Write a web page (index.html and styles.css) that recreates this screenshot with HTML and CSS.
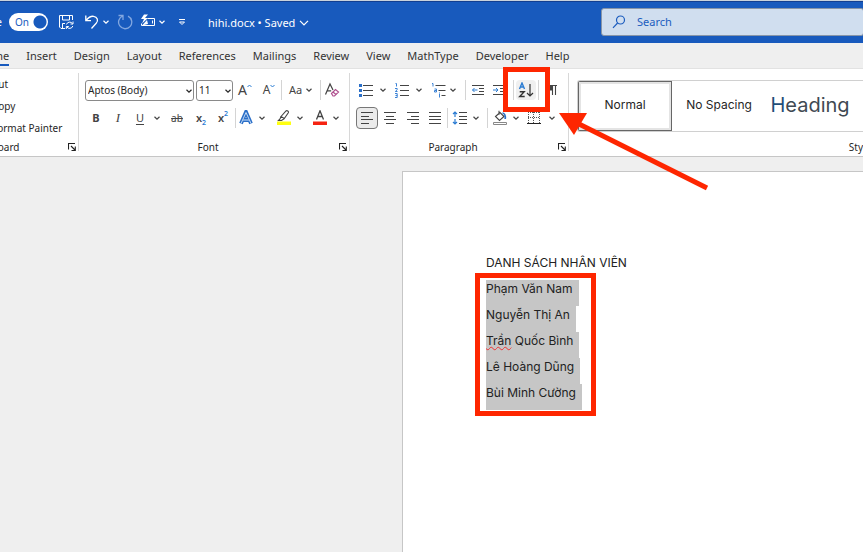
FILE: index.html
```html
<!DOCTYPE html>
<html lang="en">
<head>
<meta charset="utf-8">
<title>hihi.docx</title>
<link rel="stylesheet" href="styles.css">
</head>
<body>
<svg class="defs" width="0" height="0" aria-hidden="true">
  <symbol id="chev" viewBox="0 0 8 8"><path d="M1.500 2.800 4 5.200 6.500 2.800" fill="none" stroke="currentColor" stroke-width="1.200"/></symbol>
  <symbol id="launch" viewBox="0 0 8 8"><path d="M.5 6.500V.5H7M3 3l4 4M7.300 3.500v4H3.500" fill="none" stroke="#222" stroke-width="1.100"/></symbol>
</svg>

<header class="titlebar">
  <div class="quick">
    <label class="autosave" for="autosave">AutoSave</label>
    <span class="switch"><input type="checkbox" id="autosave" role="switch" checked><span class="on">On</span></span>
    <button aria-label="Save"><svg width="16" height="16" viewBox="0 0 16 16" fill="none" stroke="#fff"><path d="M7 14.500H3L1.500 13V1.500h13V6M4.500 1.500v4.500h7V1.500M4.500 14.500v-5H7"/><path d="M8.500 10.500a3.300 3.300 0 0 1 6-.8M15 7.500v2.500h-2.500M14.800 12a3.300 3.300 0 0 1-6 .8M8.300 15v-2.500h2.500"/></svg></button>
    <button aria-label="Undo"><svg width="16" height="16" viewBox="0 0 16 16" fill="none" stroke="#fff" stroke-width="1.300"><path d="M1.800 1.500v5.200H7M2 6.500C4 4 6.500 2 9.500 2.300c4 .4 5.200 4.500 2.700 7L7.500 14.500"/></svg></button>
    <button aria-label="Undo options"><svg width="8" height="8"><use href="#chev"/></svg></button>
    <button class="off" aria-label="Redo"><svg width="16" height="16" viewBox="0 0 16 16" fill="none" stroke="#82a7e0" stroke-width="1.300"><path d="M1.500 1.500h4.500v4.500M5.800 2A6.600 6.600 0 1 0 11 2.200"/></svg></button>
    <button aria-label="Draw table"><svg width="16" height="16" viewBox="0 0 16 16" fill="none" stroke="#fff"><path d="M7.500 4.500h7v7h-13v-2M12.500 6.500v3"/><path d="M4 .5 1 5h3L2 9.500 8 4H5l3-3.500z" fill="#fff" stroke="none"/><path d="M2 11.500 7 6l1 4z" fill="#fff" stroke="none"/></svg></button>
    <button aria-label="Draw options"><svg width="8" height="8"><use href="#chev"/></svg></button>
    <button aria-label="Customize toolbar"><svg width="8" height="8" viewBox="0 0 8 8" fill="none" stroke="#fff"><path d="M1 1.500h6M1.500 4 4 6.500 6.500 4z"/></svg></button>
  </div>
  <button class="docname">hihi.docx • Saved <svg width="10" height="10" viewBox="0 0 8 8"><path d="M.8 2.300 4 5.500 7.200 2.300" fill="none" stroke="#fff"/></svg></button>
  <div class="search">
    <svg width="14" height="14" viewBox="0 0 14 14" fill="none" stroke="#1b5cbe" stroke-width="1.200"><circle cx="8.500" cy="5" r="4"/><path d="M5.600 8 1 12.800"/></svg>
    <input type="search" placeholder="Search" aria-label="Search">
  </div>
</header>

<nav class="tabs">
  <a href="#" class="active">Home</a><a href="#">Insert</a><a href="#">Design</a><a href="#">Layout</a><a href="#">References</a><a href="#">Mailings</a><a href="#">Review</a><a href="#">View</a><a href="#">MathType</a><a href="#">Developer</a><a href="#">Help</a>
</nav>

<section class="ribbon">
  <div class="group clipboard">
    <div class="clips"><button>Cut</button><button>Copy</button><button>Format Painter</button></div>
    <footer><span>Clipboard</span><button aria-label="Clipboard settings"><svg width="8" height="8"><use href="#launch"/></svg></button></footer>
  </div>

  <div class="group font">
    <div class="row font-a">
      <span class="pick"><select aria-label="Font"><option>Aptos (Body)</option></select><svg width="8" height="8"><use href="#chev"/></svg></span>
      <span class="pick"><select aria-label="Font size"><option>11</option></select><svg width="8" height="8"><use href="#chev"/></svg></span>
      <button class="big" aria-label="Grow font">A<svg width="5" height="12" viewBox="0 0 5 12"><path d="M.5 3 2.500 1l2 2" fill="none" stroke="#2b7cd3"/></svg></button>
      <button class="mid" aria-label="Shrink font">A<svg width="5" height="12" viewBox="0 0 5 12"><path d="M.5 1 2.500 3l2-2" fill="none" stroke="#2b7cd3"/></svg></button>
      <i class="sep"></i>
      <button class="case" aria-label="Change case">Aa<svg width="8" height="8"><use href="#chev"/></svg></button>
      <i class="sep"></i>
      <button aria-label="Clear formatting"><svg width="16" height="16" viewBox="0 0 16 16" fill="none" stroke="#444" stroke-width="1.200"><path d="M1.500 12.500 6 2l3 6M3 8.800h4.200"/><path d="m7.500 11.500 4-4 3 2.500-4 4H9z" stroke="#b0508f"/><path d="m9 10 3 2.500" stroke="#b0508f"/></svg></button>
    </div>
    <div class="row font-b">
      <button class="bold">B</button>
      <button class="ital">I</button>
      <button class="under">U</button>
      <button aria-label="Underline options"><svg width="8" height="8"><use href="#chev"/></svg></button>
      <button class="strike">ab</button>
      <button class="script">x<sub>2</sub></button>
      <button class="script">x<sup>2</sup></button>
      <i class="sep"></i>
      <button aria-label="Text effects"><svg width="16" height="16" viewBox="0 0 16 16"><path d="M3 13.500 8 2l5 11.500M5 10h6" fill="none" stroke="#2b6fc8" stroke-width="3.800"/><path d="M3 13.500 8 2.500 13 13.500M5 10h6" fill="none" stroke="#c3daf5"/></svg></button>
      <button aria-label="Effects options"><svg width="8" height="8"><use href="#chev"/></svg></button>
      <button class="end" aria-label="Highlight"><svg width="16" height="16" viewBox="0 0 16 16"><path d="m5 6.500 5-5.500c1-1 3 .5 2.300 1.700L8.300 8.500zM5 6.500 4 9l-1.500 1.500h3l3-2" fill="none" stroke="#444" stroke-width="1.100"/><path fill="#ff1" d="M1 11.500h14V15H1z"/></svg></button>
      <button aria-label="Highlight options"><svg width="8" height="8"><use href="#chev"/></svg></button>
      <button class="end" aria-label="Font color"><svg width="16" height="16" viewBox="0 0 16 16"><path d="M4.500 9.500 8 .8l3.500 8.700M5.700 6.500h4.600" fill="none" stroke="#444" stroke-width="1.300"/><path fill="#f52312" d="M1 11.500h14V15H1z"/></svg></button>
      <button aria-label="Color options"><svg width="8" height="8"><use href="#chev"/></svg></button>
    </div>
    <footer><span>Font</span><button aria-label="Font settings"><svg width="8" height="8"><use href="#launch"/></svg></button></footer>
  </div>

  <div class="group para">
    <div class="row para-a">
      <button aria-label="Bullets"><svg width="16" height="16" viewBox="0 0 16 16"><path d="M5 3.500h10M5 8.500h10M5 13.500h10" stroke="#444"/><path fill="#2b6fc8" d="M1 2h3v3H1zM1 7h3v3H1zM1 12h3v3H1z"/></svg></button>
      <button aria-label="Bullet options"><svg width="8" height="8"><use href="#chev"/></svg></button>
      <button aria-label="Numbering"><svg width="16" height="16" viewBox="0 0 16 16" fill="none"><path d="M6 3.500h9M6 8.500h9M6 13.500h9" stroke="#444"/><path d="M1.500 1.500h1v3M1 6.500h2.200v1.200L1.300 9.500h2.200M1 11.500h2.200v4H1M1.500 13.500h1.700" stroke="#3b82d6"/></svg></button>
      <button aria-label="Numbering options"><svg width="8" height="8"><use href="#chev"/></svg></button>
      <button class="end" aria-label="Multilevel list"><svg width="16" height="16" viewBox="0 0 16 16" fill="none"><path d="M4.500 3.500h10M7.500 8.500h7M10.500 13.500h4" stroke="#444"/><path d="M1 1.500h1v3M3.500 7h2v3h-2V8.500h2M8.500 12v3.500M8.500 10.500v1" stroke="#3b82d6"/></svg></button>
      <button aria-label="List options"><svg width="8" height="8"><use href="#chev"/></svg></button>
      <i class="sep"></i>
      <button aria-label="Decrease indent"><svg width="14" height="14" viewBox="0 0 14 14" fill="none"><path d="M1 2.500h12M8 5.500h5M8 8.500h5M1 11.500h12" stroke="#444"/><path d="M6.500 7h-5M3.500 5l-2 2 2 2" stroke="#2b7cd3"/></svg></button>
      <button aria-label="Increase indent"><svg width="14" height="14" viewBox="0 0 14 14" fill="none"><path d="M1 2.500h12M8 5.500h5M8 8.500h5M1 11.500h12" stroke="#444"/><path d="M1 7h5M4 5l2 2-2 2" stroke="#2b7cd3"/></svg></button>
      <i class="sep"></i>
      <span class="sortcell">
        <button class="sort" aria-label="Sort"><svg width="16" height="16" viewBox="0 0 16 16" fill="none"><path d="M1.500 7 4 1l2.500 6M2.500 5h3" stroke="#2b7cd3" stroke-width="1.400"/><path d="M1.700 9.700h4.500L1.700 14.500h5" stroke="#333" stroke-width="1.400"/><path d="M12 2v12M9 11l3 3 3-3" stroke="#333" stroke-width="1.200"/></svg></button>
        <span class="mark"></span>
        <svg class="arrow" width="152" height="80" viewBox="0 0 152 80"><path d="M22 13 150 77" stroke="#fe2600" stroke-width="5"/><path d="M2 2h28L17 24z" fill="#fe2600"/></svg>
      </span>
      <i class="sep"></i>
      <button aria-label="Show marks"><svg width="12" height="14" viewBox="0 0 12 14"><path d="M5 2.500h6M6.500 2.500V12M9.500 2.500V12" stroke="#444" fill="none" stroke-width="1.100"/><path d="M6 2H4a2.700 2.700 0 0 0 0 5.400h2z" fill="#444"/></svg></button>
    </div>
    <div class="row para-b">
      <button class="pressed" aria-label="Align left" aria-pressed="true"><svg width="14" height="14" viewBox="0 0 14 14"><path d="M1 1.500h12M1 5.500h8M1 8.500h12M1 12.500h8" stroke="#444"/></svg></button>
      <button aria-label="Center"><svg width="14" height="14" viewBox="0 0 14 14"><path d="M1 1.500h12M3 5.500h8M1 8.500h12M3 12.500h8" stroke="#444"/></svg></button>
      <button aria-label="Align right"><svg width="14" height="14" viewBox="0 0 14 14"><path d="M1 1.500h12M5 5.500h8M1 8.500h12M5 12.500h8" stroke="#444"/></svg></button>
      <button aria-label="Justify"><svg width="14" height="14" viewBox="0 0 14 14"><path d="M1 1.500h12M1 5.500h12M1 8.500h12M1 12.500h12" stroke="#444"/></svg></button>
      <i class="sep"></i>
      <button aria-label="Line spacing"><svg width="16" height="14" viewBox="0 0 16 14" fill="none"><path d="M7 1.500h8M7 5.500h8M7 8.500h8M7 12.500h8" stroke="#444"/><path d="M3 1v5M1 3l2-2 2 2M3 8v5M1 11l2 2 2-2" stroke="#2b7cd3" stroke-width="1.200"/></svg></button>
      <button aria-label="Spacing options"><svg width="8" height="8"><use href="#chev"/></svg></button>
      <i class="sep"></i>
      <button aria-label="Shading"><svg width="16" height="16" viewBox="0 0 16 16" fill="none"><path d="m3.500 6.500 4.500-4 4 4-4.500 4zM7 .8v4" stroke="#444" stroke-width="1.100"/><path d="M10.500 3c2 .2 3.200 2.500 2.700 6" stroke="#2b6fc8" stroke-width="1.700"/><path d="M1.500 12.500h13v2h-13z" stroke="#888" fill="#fff"/></svg></button>
      <button aria-label="Shading options"><svg width="8" height="8"><use href="#chev"/></svg></button>
      <button aria-label="Borders"><svg width="14" height="14" viewBox="0 0 14 14"><path d="M1 1.500h12M1 6.500h12M1.500 1v12M6.500 1v12M12.500 1v12" stroke="#555" stroke-dasharray="1 1"/><path d="M0 12.500h14" stroke="#222"/></svg></button>
      <button aria-label="Border options"><svg width="8" height="8"><use href="#chev"/></svg></button>
    </div>
    <footer><span>Paragraph</span><button aria-label="Paragraph settings"><svg width="8" height="8"><use href="#launch"/></svg></button></footer>
  </div>

  <div class="group styles">
    <div class="gallery">
      <button class="chosen">Normal</button><button>No Spacing</button><button class="heading"><span>H</span>eading</button>
    </div>
    <footer><span>Styles</span></footer>
  </div>
</section>

<main class="desk">
  <article class="page" lang="vi">
    <p class="caption">DANH SÁCH NHÂN VIÊN</p>
    <div class="names">
      <p><span>Phạm Văn Nam</span></p>
      <p><span>Nguyễn Thị An</span></p>
      <p><span><u>Trần</u> Quốc Bình</span></p>
      <p><span>Lê Hoàng Dũng</span></p>
      <p><span>Bùi Minh Cường</span></p>
    </div>
  </article>
</main>
</body>
</html>
```
FILE: styles.css
```css
* { box-sizing: border-box; }
body {
  margin: 0;
  min-height: 100vh;
  display: flex;
  flex-direction: column;
  overflow: hidden;
  background: #efefef;
  color: #262626;
  font: 11px/16px "Noto Sans", "Open Sans", sans-serif;
}
.defs { position: absolute; }
button {
  display: flex;
  align-items: center;
  justify-content: center;
  padding: 0;
  border: 0;
  background: none;
  color: inherit;
  font: inherit;
  white-space: nowrap;
}
svg { flex: none; }
p { margin: 0; }

.titlebar {
  display: flex;
  align-items: center;
  height: 43px;
  border-top: 1px solid #c9d2dc;
  background: #185abd;
  box-shadow: inset 0 1px #123f91;
  color: #fff;
}
.quick {
  display: grid;
  grid-template-columns: 9px 39px 36px 16px 11px 28px 18px 10px 30px 11px;
  align-items: center;
}
.autosave { justify-self: end; padding-right: 7px; }
.switch { position: relative; display: flex; }
.switch input {
  appearance: none;
  width: 39px;
  height: 18px;
  margin: 0;
  border-radius: 9px;
  background: radial-gradient(circle at 31px 9px, #185abd 6px, #fff 7px);
}
.on { position: absolute; left: 6px; top: 1px; color: #185abd; font-size: 10px; pointer-events: none; }
.docname { gap: 4px; font-size: 10px; padding-top: 2px; }
.docname { font-size: 11px; }
.search {
  display: flex;
  align-items: center;
  gap: 9px;
  flex: none;
  width: calc(100% - 600px);
  height: 28px;
  margin: 0 -1px 0 auto;
  padding-left: 10px;
  border: 1px solid #8795a8;
  border-radius: 3px;
  background: #d0deef;
}
.search input {
  flex: 1;
  min-width: 0;
  border: 0;
  outline: 0;
  background: none;
  font: inherit;
}
.search input::placeholder { color: #1b5cbe; opacity: 1; }

.tabs {
  display: flex;
  gap: 17px;
  height: 26px;
  margin-left: -22px;
  border-bottom: 1px solid #e2e2e2;
}
.tabs a { padding-top: 5px; color: #333; text-decoration: none; }
.tabs .active { height: 23px; border-bottom: 2px solid #185abd; }

.ribbon {
  display: flex;
  height: 88px;
  border-bottom: 1px solid #c6c6c6;
  background: #fff;
}
.group {
  position: relative;
  display: flex;
  flex-direction: column;
  flex: none;
  padding: 7px 0 0 6px;
}
.group + .group::before {
  content: "";
  position: absolute;
  left: -1px;
  top: 4px;
  bottom: 5px;
  width: 1px;
  background: #d8d8d8;
}
.clipboard { width: 79px; padding: 4px 0 0; }
.font { width: 271px; }
.para { width: 219px; }
.styles { flex: 1; min-width: 0; padding: 11px 0 0 8px; }
.clips { height: 59px; margin-left: -8px; font-size: 10px; }
.clips button { height: 22px; }
.group footer {
  display: flex;
  align-items: center;
  height: 24px;
  padding: 6px 3px 0 0;
  font-size: 10px;
}
.group footer span { flex: 1; text-align: center; }
.font footer span, .para footer span { margin-left: -8px; }
.clipboard footer span { text-align: left; margin-left: -26px; }
.styles footer { margin-right: -16px; }
.styles footer span { text-align: right; }

.row {
  display: grid;
  align-items: center;
  height: 28px;
}
.font-a { grid-template-columns: 111px 37px 24px 24px 1px 38px 1px 22px; }
.font-b { grid-template-columns: 22px 22px 22px 12px 28px 20px 24px 1px 20px 12px 24px 16px 20px 16px; }
.para-a { grid-template-columns: 20px 14px 24px 10px 23px 12px 7px 24px 18px 6px 24px 1px 26px; }
.para-b { grid-template-columns: 22px 24px 22px 22px 2px 24px 8px 8px 24px 8px 28px 8px; }
.sep { justify-self: end; width: 1px; height: 20px; background: #d4d4d4; }
.row .end { justify-content: flex-end; }
.pick { position: relative; display: flex; width: 109px; }
.pick + .pick { width: 37px; }
.pick select {
  appearance: none;
  width: 100%;
  height: 21px;
  padding: 0 0 0 2px;
  border: 1px solid #8a8a8a;
  border-radius: 3px;
  background: #fff;
  color: #262626;
  font: inherit;
  font-size: 10px;
}
.pick svg { position: absolute; right: 1px; top: 7px; pointer-events: none; }
.row button { color: #444; }
.big { font-size: 14px; }
.mid { font-size: 12px; }
.case { gap: 3px; font-size: 11px; }
.bold { font-weight: 700; }
.ital { font: italic 13px "Liberation Serif", serif; }
.under { text-decoration: underline; text-underline-offset: 2px; }
.strike { text-decoration: line-through; font-size: 10px; }
.script { font-weight: 600; }
.script sub, .script sup { color: #2b7cd3; font-size: 7px; line-height: 7px; }
.script sub { align-self: flex-end; }
.script sup { align-self: flex-start; }
.pressed { height: 22px; border: 1px solid #777; border-radius: 4px; background: #ebebeb; }
.sortcell { position: relative; display: flex; justify-content: center; }
.sort { width: 20px; height: 20px; border-radius: 4px; background: #f0f0f0; }
.mark {
  position: absolute;
  z-index: 1;
  left: -11px;
  top: -13px;
  width: 47px;
  height: 45px;
  border: 5px solid #fe2600;
}
.arrow { position: absolute; z-index: 2; left: 43px; top: 31px; }

.gallery {
  display: flex;
  height: 52px;
  padding: 1px;
  overflow: hidden;
  border: 1px solid #d0d0d0;
  border-right: 0;
  border-radius: 3px 0 0 3px;
  font: 12px/16px Inter, sans-serif;
}
.gallery button { flex: none; width: 94px; padding-bottom: 2px; }
.gallery .chosen { margin: -1px 0 -1px -1px; border: 1px solid #666; box-shadow: inset 0 0 0 2px #e4e4e4; }
.gallery .heading { padding-right: 6px; color: #404952; font-size: 20px; }
.heading span { color: #1f4e79; }

.desk { flex: 1; display: flex; padding: 14px 0 0 402px; }
.page {
  flex: 1;
  padding: 82px 0 0 83px;
  border: 1px solid #c6c6c6;
  border-width: 1px 0 0 1px;
  background: #fff;
  color: #222;
  font: 12px/17px Inter, sans-serif;
}
.caption { padding-bottom: 9px; }
.names { position: relative; width: 121px; }
.names::after {
  content: "";
  position: absolute;
  inset: -7px 11px -6px -11px;
  border: 5px solid #fe2600;
}
.names p { display: flex; }
.names span { padding: 0 6px 9px 0; background: #c6c6c6; }
.names u { text-decoration: underline wavy #e33 1px; text-underline-offset: 1px; text-decoration-skip-ink: none; }
```
